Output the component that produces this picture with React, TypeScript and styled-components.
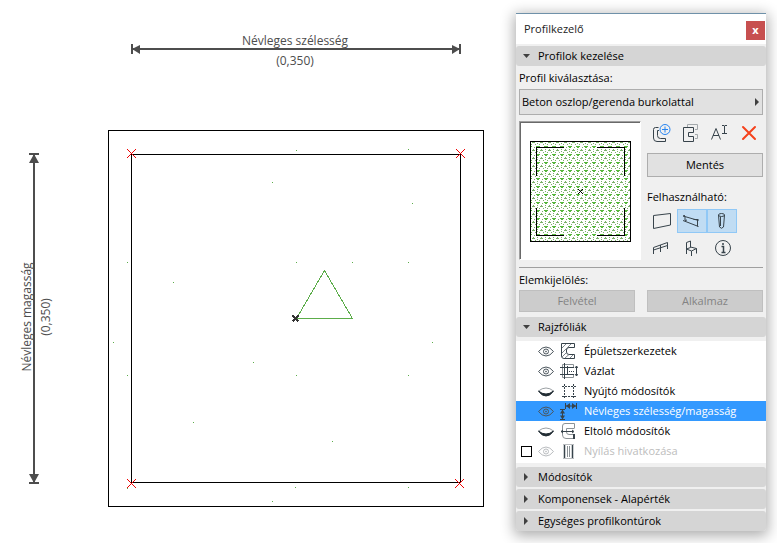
import React, { useState } from "react";
import styled, { createGlobalStyle } from "styled-components";

const GlobalStyle = createGlobalStyle`
  *, *::before, *::after { box-sizing: border-box; }
  body {
    margin: 0;
    background: #fff;
    color: #000;
    font: 11px/20px "Open Sans", "Noto Sans", sans-serif;
  }
  button, select, input { font: inherit; color: inherit; margin: 0; }
`;

const Page = styled.main`
  display: flex;
  align-items: flex-start;
  min-height: 100vh;
`;

const Canvas = styled.section`
  flex: 1;
  min-width: 0;
`;

const Drawing = styled.svg`
  display: block;
  width: 100%;
  font-family: "Open Sans", "Noto Sans", sans-serif;
  font-size: 12px;
`;

const Palette = styled.aside`
  width: 250px;
  margin: 13px 11px 12px 0;
  border-top: 1px solid #6f91a9;
  border-radius: 0 0 3px 3px;
  background: #f0f0f0;
  box-shadow: 0 3px 14px 2px rgba(0, 0, 0, 0.32);
`;

const TitleBar = styled.header`
  display: flex;
  align-items: center;
  justify-content: space-between;
  height: 30px;
  padding: 3px 1px 0 8px;
  background: #fff;
`;

const Title = styled.h1`
  margin: 0;
  padding-bottom: 4px;
  font-size: 11px;
  font-weight: 400;
  color: #222;
`;

const CloseButton = styled.button`
  width: 19px;
  height: 19px;
  padding: 0 0 2px;
  border: 0;
  background: #c75050;
  color: #fff;
  font-weight: 700;
  line-height: 16px;
`;

const SectionHeader = styled.button`
  display: flex;
  align-items: center;
  gap: 8px;
  width: 100%;
  height: 20px;
  margin-top: 2px;
  padding: 0 7px;
  border: 0;
  border-radius: 3px;
  background: #d5d5d5;
  text-align: left;
`;

const Arrow = styled.svg`
  flex: none;
  width: 7px;
  height: 8px;
  fill: #404040;
`;

const Body = styled.div`
  padding: 0 3px;
`;

const Caption = styled.label`
  display: block;
  height: 20px;
  line-height: 20px;
`;

const PickerCaption = styled(Caption)`
  height: 23px;
  line-height: 24px;
`;

const Picker = styled.div`
  display: grid;
  align-items: center;
  height: 26px;
  > * { grid-area: 1 / 1; }
  > svg { justify-self: end; margin-right: 2px; pointer-events: none; }
`;

const PickerSelect = styled.select`
  appearance: none;
  width: 100%;
  height: 26px;
  padding: 0 14px 0 2px;
  border: 1px solid #adadad;
  border-radius: 0;
  background: #e1e1e1;
`;

const ProfileRow = styled.div`
  display: flex;
  gap: 6px;
  margin-top: 6px;
`;

const Preview = styled.svg`
  flex: none;
  width: 122px;
  height: 139px;
  border: 1px solid #a0a0a0;
  border-right-color: #fff;
  border-bottom-color: #fff;
  background: #fff;
`;

const Tools = styled.div`
  flex: 1;
  display: flex;
  flex-direction: column;
`;

const IconRow = styled.div`
  display: grid;
  grid-template-columns: repeat(4, 1fr);
  height: 24px;
  margin-bottom: 8px;
`;

const IconButton = styled.button<{ $active?: boolean }>`
  display: flex;
  align-items: center;
  justify-content: center;
  padding: 0;
  border: 1px solid ${(p) => (p.$active ? "#90c8f6" : "transparent")};
  background: ${(p) => (p.$active ? "#c0dcf3" : "transparent")};
`;

const UsageGrid = styled.div`
  display: grid;
  grid-template-columns: repeat(3, 30px);
  grid-auto-rows: 24px;
  row-gap: 3px;
`;

const UsageCaption = styled.span`
  margin: 10px 0 2px;
`;

const Icon = styled.svg`
  flex: none;
  display: block;
  fill: none;
  stroke: #37434b;
`;

const PushButton = styled.button`
  height: 24px;
  padding: 0;
  border: 1px solid #adadad;
  background: #e1e1e1;
  line-height: 20px;
  &:disabled {
    height: 22px;
    border-color: #bfbfbf;
    background: #ccc;
    color: #838383;
  }
`;

const Divider = styled.hr`
  height: 1px;
  margin: 7px 0 2px;
  border: 0;
  background: #a0a0a0;
`;

const ButtonPair = styled.div`
  display: grid;
  grid-template-columns: 1fr 1fr;
  gap: 12px;
  margin-bottom: 5px;
`;

const LayerList = styled.ul`
  margin: 4px 0;
  padding: 0 0 2px;
  list-style: none;
  background: #fff;
`;

const LayerRow = styled.li<{ $selected?: boolean; $muted?: boolean }>`
  display: grid;
  grid-template-columns: 11px 16px 18px 1fr;
  column-gap: 6px;
  align-items: center;
  height: 20px;
  padding-left: 5px;
  background: ${(p) => (p.$selected ? "#3399ff" : "transparent")};
  color: ${(p) => (p.$selected ? "#fff" : p.$muted ? "#bdbdbd" : "#000")};
`;

const LayerCheck = styled.input`
  appearance: none;
  grid-column: 1;
  width: 11px;
  height: 11px;
  border: 1px solid #000;
  background: #fff;
  &:checked { background: #333; }
`;

const EyeButton = styled.button`
  grid-column: 2;
  padding: 0;
  border: 0;
  background: none;
`;

const LayerName = styled.label`
  white-space: nowrap;
`;

const DARK = "#4d4d4d";
const GREEN = "#5cad4a";

const specks = [
  [296, 150], [408, 149], [272, 182], [412, 203], [127, 262], [296, 262], [352, 262],
  [408, 262], [173, 282], [113, 342], [432, 342], [253, 362], [127, 375], [296, 375],
  [408, 375], [193, 422], [332, 441], [127, 488], [295, 487], [408, 487], [272, 501],
];
const corners = [[131, 153], [460, 153], [131, 483], [459, 483]];

function ProfileDrawing() {
  return (
    <Drawing viewBox="0 0 516 543" preserveAspectRatio="xMinYMin" role="img" aria-label="Profil">
      <g shapeRendering="crispEdges" fill="none">
        <rect x="108.5" y="130.5" width="375" height="376" stroke="#000" />
        <rect x="131.5" y="154.5" width="329" height="328" stroke="#000" />
        {specks.map(([x, y]) => (
          <rect key={`${x}-${y}`} x={x} y={y} width="1" height="1" fill={GREEN} />
        ))}
        <path d="M296.500 318.500L324.500 270.500L352.500 318.500Z" stroke={GREEN} />
        {corners.map(([x, y]) => (
          <path key={`${x}-${y}`} d={`M${x - 4} ${y - 4}l9 9m0 -9l-9 9`} stroke="#f00000" />
        ))}
        <path d="M292.500 315.500l6 6m0 -6l-6 6" stroke="#333" strokeWidth="2" />
        <path d="M131 49H461M132 44V54M460 44V54" stroke={DARK} strokeWidth="2" />
        <path d="M34 154V484M29 154H39M29 483H39" stroke={DARK} strokeWidth="2" />
      </g>
      <path
        fill={DARK}
        d="M132 49l8-4v9zM460 49l-8-4v9zM34 154l-5 9h10zM34 483l-5-9h10z"
      />
      <g fill={DARK} textAnchor="middle">
        <text x="295" y="45">Névleges szélesség</text>
        <text x="295" y="65">(0,350)</text>
        <text transform="translate(31 317) rotate(-90)">Névleges magasság</text>
        <text transform="translate(50 317) rotate(-90)">(0,350)</text>
      </g>
    </Drawing>
  );
}

function ProfilePreview() {
  return (
    <Preview viewBox="0 0 120 137" role="img" aria-label="Profil előnézete" shapeRendering="crispEdges">
      <defs>
        <pattern id="hatch" width="8" height="8" patternUnits="userSpaceOnUse">
          <path fill="#56b63c" d="M0 0h4v1h-4zM1 1h2v1h-2z" />
          <path fill="#7ab068" d="M4 4h3v1h-3zM5 3h1v1h-1zM1 3h1v1h-1zM1 5h1v1h-1zM6 1h1v1h-1zM3 6h1v1h-1zM7 6h1v1h-1z" />
        </pattern>
      </defs>
      <path d="M0.500 137V0.500H120" fill="none" stroke="#696969" />
      <rect x="10.500" y="19.500" width="100" height="100" fill="url(#hatch)" stroke="#000" />
      <path
        fill="none"
        stroke="#000"
        d="M16.500 54V25.500H44M77 25.500H104.500V54M16.500 86V113.500H44M77 113.500H104.500V86"
      />
      <path
        d="M58 67h1v1h-1zM62 67h1v1h-1zM59 68h1v1h-1zM61 68h1v1h-1zM60 69h1v1h-1zM59 70h1v1h-1zM61 70h1v1h-1zM58 71h1v1h-1zM62 71h1v1h-1z"
      />
    </Preview>
  );
}

const NewProfile = () => (
  <Icon width="20" height="20" viewBox="0 0 20 20">
    <path d="M6.500 4.500H3.500Q1.500 4.500 1.500 6.500V15Q1.500 18.500 5 18.500H13.500V15.500H8.500Q5.500 15.500 5.500 12.500V7.500H7" />
    <circle cx="13" cy="6.500" r="5" stroke="#2684f0" fill="#f0f0f0" />
    <path d="M13 3.500v6M10 6.500h6" stroke="#2684f0" />
  </Icon>
);
const CopyProfile = () => (
  <Icon width="20" height="20" viewBox="0 0 20 20">
    <path d="M6.500 4V1.500H16.500V6.500H14M14 11.500H16.500V15.500H14" stroke="#a3a8ab" />
    <path d="M2.500 4.500H12.500V9.500H7.500V13.500H12.500V18.500H2.500Z" />
  </Icon>
);
const RenameProfile = () => (
  <Icon width="20" height="20" viewBox="0 0 20 20">
    <path d="M1.500 16.500L6 5.500L10.500 16.500M3 12.500H9" />
    <path d="M12 2.500h2l.5.500.5-.500h2M14.500 3v7M12 10.500h5" />
  </Icon>
);
const DeleteProfile = () => (
  <Icon width="18" height="18" viewBox="0 0 18 18">
    <path d="M3 3L15 15M15 3L3 15" stroke="#f5421c" strokeWidth="2" strokeLinecap="round" />
  </Icon>
);
const WallIcon = () => (
  <Icon width="20" height="20" viewBox="0 0 20 20">
    <path d="M1.500 4.500L18.500 2.500V14L1.500 17.500Z" />
  </Icon>
);
const BeamIcon = () => (
  <Icon width="20" height="20" viewBox="0 0 20 20">
    <path d="M1 5L16.500 9.500M1 5L3 4.500M3 5.500V9.500M1 9.500L16.500 15.500M11.500 8.500H16.500M15.500 9V15.500M3 9.500L5 9" />
  </Icon>
);
const ColumnIcon = () => (
  <Icon width="20" height="20" viewBox="0 0 20 20">
    <ellipse cx="9.500" cy="4" rx="3" ry="1.500" />
    <path d="M6.500 4L7.500 16Q9.500 18.500 11.500 16L12.500 4M8.500 6V15" />
  </Icon>
);
const RailingIcon = () => (
  <Icon width="20" height="20" viewBox="0 0 20 20">
    <path d="M1.500 16V9.500L15.500 4.500V11M1.500 12L15.500 7.500M8.500 7V14" />
  </Icon>
);
const ChairIcon = () => (
  <Icon width="20" height="20" viewBox="0 0 20 20">
    <path d="M4.500 16V4.500L8.500 3V9.500L4.500 11L9.500 13L14.500 10.500L8.500 9M9.500 13V18M14.500 10.500V15.500" />
  </Icon>
);
const InfoIcon = () => (
  <Icon width="20" height="20" viewBox="0 0 20 20">
    <circle cx="11" cy="10" r="7.500" />
    <path d="M9.500 8.500H11.500V14M9.500 14.500H13.500" strokeWidth="1.500" />
    <circle cx="11" cy="6" r="1" fill="#37434b" stroke="none" />
  </Icon>
);

const DownArrow = () => (
  <Arrow viewBox="0 0 7 8"><path d="M0 2h7L3.500 6z" /></Arrow>
);
const RightArrow = () => (
  <Arrow viewBox="0 0 7 8"><path d="M1 0v8l4-4z" /></Arrow>
);

function Eye({ open, muted }: { open: boolean; muted?: boolean }) {
  return (
    <Icon width="16" height="12" viewBox="0 0 16 12">
      {open ? (
        <g stroke={muted ? "#b9bcbf" : "#4a555c"}>
          <path d="M.5 6.500Q4 2 8 2T15.500 6.500Q12 11 8 11T.5 6.500Z" />
          <circle cx="8" cy="6.500" r="2.500" />
          <circle cx="8" cy="6.500" r=".5" />
        </g>
      ) : (
        <g>
          <path d="M.5 6Q4 3 8 3T15.500 6" stroke="#9ba0a4" />
          <path d="M.5 6Q3.500 11 8 11T15.500 6Q12 9 8 9T.5 6Z" fill="#222d34" stroke="#222d34" />
        </g>
      )}
    </Icon>
  );
}

const layerIcons: Record<string, React.ReactNode> = {
  structure: (
    <>
      <path d="M1.500 1.500H14.500V5.500H9Q6.500 5.500 6.500 8V10Q6.500 12.500 9 12.500H14.500V16.500H4Q1.500 16.500 1.500 14Z" />
      <path d="M2 6L6 2M2 11L11 2M2 15L6 11M5 16L9 12.500M10 16L13 13" stroke="#7d868c" />
    </>
  ),
  sketch: (
    <>
      <path d="M13.500 5V2.500H2.500V15.500H13.500V13" stroke="#8b9296" />
      <path d="M4.500 1V17M7.500 4V13M0 5.500H14M0 12.500H14" />
      <path d="M7 9.500H14" strokeDasharray="1 1" />
      <path d="M16.500 4V14M15 6l1.500-2L18 6M15 12l1.500 2L18 12" />
    </>
  ),
  stretch: (
    <>
      <path d="M2 4.500H16M2 14.500H16" strokeDasharray="2 1" />
      <path d="M4.500 2V17M13.500 2V17" strokeDasharray="2 1" />
    </>
  ),
  nominal: (
    <>
      <path d="M0 7.500H5M0 17.500H5M2.500 8V17M5.500 1V7M16.500 1V7M6 4H16" />
      <path d="M2.500 7.500l-2.500 4h5zM2.500 17.500l-2.500-4h5zM6 4l4-3v6zM16 4l-4-3v6z" fill="#37434b" stroke="none" />
    </>
  ),
  offset: (
    <>
      <path d="M14.500 6V1.500H5Q2.500 1.500 2.500 4V13Q2.500 16.500 6 16.500H14.500V12.500H9Q6.500 12.500 6.500 10V6.500H14.500" stroke="#8b9296" />
      <path d="M1 9.500H13M3 8L1 9.500L3 11M12 8l2 1.500L12 11" />
      <path d="M14 12V17" strokeWidth="2" />
    </>
  ),
  opening: (
    <>
      <path d="M4.500 2V17M12.500 2V17" strokeWidth="1.500" />
      <path d="M7.500 4V15M9.500 4V15" stroke="#8b9296" />
      <path d="M3 2.500H14M3 16.500H14" stroke="#b9bcbf" />
    </>
  ),
};

interface Layer {
  id: string;
  name: string;
  visible: boolean;
  muted?: boolean;
}

const initialLayers: Layer[] = [
  { id: "structure", name: "Épületszerkezetek", visible: true },
  { id: "sketch", name: "Vázlat", visible: true },
  { id: "stretch", name: "Nyújtó módosítók", visible: false },
  { id: "nominal", name: "Névleges szélesség/magasság", visible: true },
  { id: "offset", name: "Eltoló módosítók", visible: false },
  { id: "opening", name: "Nyílás hivatkozása", visible: true, muted: true },
];

const actions = [
  { label: "Új profil", icon: <NewProfile /> },
  { label: "Profil másolása", icon: <CopyProfile /> },
  { label: "Átnevezés", icon: <RenameProfile /> },
  { label: "Törlés", icon: <DeleteProfile /> },
];

const usages = [
  { label: "Fal", icon: <WallIcon /> },
  { label: "Gerenda", icon: <BeamIcon />, active: true },
  { label: "Oszlop", icon: <ColumnIcon />, active: true },
  { label: "Korlát", icon: <RailingIcon /> },
  { label: "Objektum", icon: <ChairIcon /> },
  { label: "Információ", icon: <InfoIcon /> },
];

export default function App() {
  const [layers, setLayers] = useState(initialLayers);
  const [selected, setSelected] = useState("nominal");
  const toggle = (id: string) =>
    setLayers(layers.map((l) => (l.id === id ? { ...l, visible: !l.visible } : l)));

  return (
    <>
      <GlobalStyle />
      <Page>
        <Canvas>
          <ProfileDrawing />
        </Canvas>
        <Palette>
          <TitleBar>
            <Title>Profilkezelő</Title>
            <CloseButton aria-label="Bezárás">x</CloseButton>
          </TitleBar>
          <SectionHeader aria-expanded="true"><DownArrow />Profilok kezelése</SectionHeader>
          <Body>
            <PickerCaption htmlFor="profile">Profil kiválasztása:</PickerCaption>
            <Picker>
              <PickerSelect id="profile">
                <option>Beton oszlop/gerenda burkolattal</option>
              </PickerSelect>
              <Arrow viewBox="0 0 7 8"><path d="M1 0v8l4-4z" /></Arrow>
            </Picker>
            <ProfileRow>
              <ProfilePreview />
              <Tools>
                <IconRow>
                  {actions.map((a) => (
                    <IconButton key={a.label} aria-label={a.label}>{a.icon}</IconButton>
                  ))}
                </IconRow>
                <PushButton>Mentés</PushButton>
                <UsageCaption>Felhasználható:</UsageCaption>
                <UsageGrid>
                  {usages.map((u) => (
                    <IconButton key={u.label} aria-label={u.label} $active={u.active}>{u.icon}</IconButton>
                  ))}
                </UsageGrid>
              </Tools>
            </ProfileRow>
            <Divider />
            <Caption as="div">Elemkijelölés:</Caption>
            <ButtonPair>
              <PushButton disabled>Felvétel</PushButton>
              <PushButton disabled>Alkalmaz</PushButton>
            </ButtonPair>
          </Body>
          <SectionHeader aria-expanded="true"><DownArrow />Rajzfóliák</SectionHeader>
          <LayerList>
            {layers.map((l) => (
              <LayerRow
                key={l.id}
                $selected={l.id === selected}
                $muted={l.muted}
                onClick={() => setSelected(l.id)}
              >
                {l.muted && <LayerCheck type="checkbox" id={`check-${l.id}`} />}
                <EyeButton aria-label={`${l.name} láthatósága`} onClick={() => toggle(l.id)}>
                  <Eye open={l.visible} muted={l.muted} />
                </EyeButton>
                <Icon width="18" height="19" viewBox="0 0 18 19">{layerIcons[l.id]}</Icon>
                <LayerName htmlFor={l.muted ? `check-${l.id}` : undefined}>{l.name}</LayerName>
              </LayerRow>
            ))}
          </LayerList>
          <SectionHeader aria-expanded="false"><RightArrow />Módosítók</SectionHeader>
          <SectionHeader aria-expanded="false"><RightArrow />Komponensek - Alapérték</SectionHeader>
          <SectionHeader aria-expanded="false"><RightArrow />Egységes profilkontúrok</SectionHeader>
        </Palette>
      </Page>
    </>
  );
}
